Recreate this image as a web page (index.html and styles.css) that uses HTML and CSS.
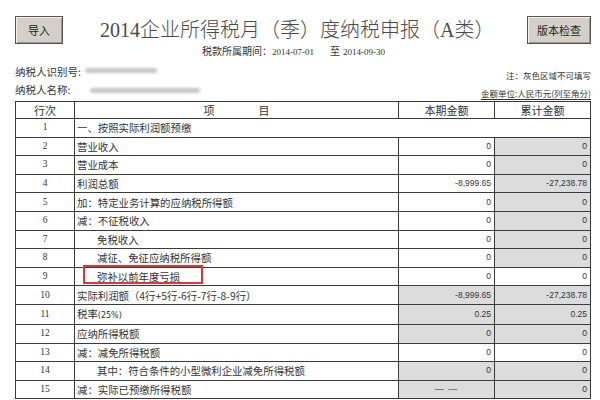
FILE: index.html
```html
<!DOCTYPE html>
<html lang="zh-CN">
<head>
<meta charset="utf-8">
<title>2014企业所得税月（季）度纳税申报（A类）</title>
<link rel="stylesheet" href="styles.css">
</head>
<body>
<div class="page">
  <header class="top">
    <button class="btn">导入</button>
    <h1 class="title">2014企业所得税月（季）度纳税申报（A类）</h1>
    <button class="btn btn-wide">版本检查</button>
  </header>
  <div class="period">税款所属期间：<span class="d">2014-07-01</span><span class="to">至</span><span class="d">2014-09-30</span></div>
  <div class="info">
    <div class="info-row">
      <span class="label">纳税人识别号:</span><span class="blur b1"></span>
      <span class="note">注：灰色区域不可填写</span>
    </div>
    <div class="info-row">
      <span class="label">纳税人名称:</span><span class="blur b2"></span>
      <span class="note unit">金额单位:人民币元(列至角分)</span>
    </div>
  </div>
  <table class="sheet">
    <colgroup>
      <col class="c-no"><col class="c-item"><col class="c-amt"><col class="c-amt">
    </colgroup>
    <thead>
      <tr><th>行次</th><th class="h-item"><span>项</span><span>目</span></th><th>本期金额</th><th>累计金额</th></tr>
    </thead>
    <tbody>
      <tr><td class="no">1</td><td class="item" colspan="3">一、按照实际利润额预缴</td></tr>
      <tr><td class="no">2</td><td class="item">营业收入</td><td class="amt">0</td><td class="amt g">0</td></tr>
      <tr><td class="no">3</td><td class="item">营业成本</td><td class="amt">0</td><td class="amt g">0</td></tr>
      <tr><td class="no">4</td><td class="item">利润总额</td><td class="amt">-8,999.65</td><td class="amt g">-27,238.78</td></tr>
      <tr><td class="no">5</td><td class="item">加：特定业务计算的应纳税所得额</td><td class="amt">0</td><td class="amt g">0</td></tr>
      <tr><td class="no">6</td><td class="item">减：不征税收入</td><td class="amt">0</td><td class="amt g">0</td></tr>
      <tr><td class="no">7</td><td class="item ind">免税收入</td><td class="amt">0</td><td class="amt g">0</td></tr>
      <tr><td class="no">8</td><td class="item ind">减征、免征应纳税所得额</td><td class="amt">0</td><td class="amt g">0</td></tr>
      <tr><td class="no">9</td><td class="item ind mark">弥补以前年度亏损<span class="hl"></span></td><td class="amt">0</td><td class="amt">0</td></tr>
      <tr><td class="no">10</td><td class="item">实际利润额（4行+5行-6行-7行-8-9行）</td><td class="amt g">-8,999.65</td><td class="amt g">-27,238.78</td></tr>
      <tr><td class="no">11</td><td class="item">税率<span class="lat">(25%)</span></td><td class="amt g">0.25</td><td class="amt g">0.25</td></tr>
      <tr><td class="no">12</td><td class="item">应纳所得税额</td><td class="amt g">0</td><td class="amt g">0</td></tr>
      <tr><td class="no">13</td><td class="item">减：减免所得税额</td><td class="amt">0</td><td class="amt">0</td></tr>
      <tr><td class="no">14</td><td class="item ind">其中：符合条件的小型微利企业减免所得税额</td><td class="amt g">0</td><td class="amt g">0</td></tr>
      <tr><td class="no">15</td><td class="item">减：实际已预缴所得税额</td><td class="amt g dash">— —</td><td class="amt g">0</td></tr>
    </tbody>
  </table>
</div>
</body>
</html>
```
FILE: styles.css
```css
html, body {
  margin: 0;
  padding: 0;
  background: #fff;
}
body {
  font-family: "Noto Sans CJK SC", sans-serif;
  color: #2a2a2a;
}
.page {
  width: 576px;
  padding: 16px 9px 0 15px;
}
.top {
  display: flex;
  align-items: center;
  height: 28px;
}
.btn {
  width: 48px;
  height: 28px;
  padding: 0;
  margin: 0;
  background: #d4d0c8;
  border: 1px solid #555;
  box-shadow: inset 1px 1px 0 #f4f2ee, inset -1px -1px 0 #9a968e;
  font-family: "Noto Sans CJK SC", sans-serif;
  font-size: 11px;
  color: #222;
}
.btn-wide {
  width: 64px;
  margin-left: auto;
}
.title {
  margin: 0 0 0 37px;
  font-family: "Liberation Serif", "Noto Sans CJK SC", serif;
  font-weight: 300;
  font-size: 20px;
  line-height: 28px;
  color: #4a4a4a;
  letter-spacing: 0;
}
.period {
  margin-top: 1px;
  height: 12px;
  line-height: 12px;
  font-size: 10px;
  padding-left: 187px;
  color: #333;
}
.period .d {
  font-family: "Liberation Serif", serif;
  font-size: 9px;
}
.period .to {
  margin: 0 3px 0 16px;
}
.info {
  margin-top: 6px;
}
.info-row {
  display: flex;
  align-items: center;
  height: 18px;
}
.label {
  font-size: 10.5px;
  line-height: 18px;
  color: #333;
}
.blur {
  display: inline-block;
  height: 5px;
  background: #c4c4c4;
  filter: blur(1.5px);
  border-radius: 3px;
}
.b1 {
  width: 72px;
  margin-left: 4px;
  margin-top: -4px;
}
.b2 {
  width: 110px;
  margin-left: 20px;
}
.note {
  margin-left: auto;
  align-self: flex-end;
  font-size: 8.5px;
  line-height: 11px;
  color: #333;
}
.unit {
  text-decoration: underline;
  text-underline-offset: 2px;
}
.sheet {
  margin-top: 2px;
  width: 576px;
  border-collapse: collapse;
  table-layout: fixed;
  border: 1px solid #333;
}
.c-no { width: 59px; }
.c-item { width: 324px; }
.c-amt { width: 96px; }
.sheet th, .sheet td {
  border: 1px solid #3a3a3a;
  padding: 0;
  white-space: nowrap;
  overflow: visible;
}
.sheet th {
  height: 16px;
  font-weight: 400;
  font-size: 11px;
  line-height: 16px;
  color: #333;
  text-align: center;
}
.h-item span {
  display: inline-block;
  margin-left: 22px;
  margin-right: 22px;
}
.sheet td {
  height: 17.6px;
  line-height: 17px;
}
.no {
  text-align: center;
  font-family: "Liberation Serif", serif;
  font-size: 9.5px;
  color: #333;
}
.item {
  font-size: 10.4px;
  padding-left: 2px !important;
  color: #333;
}
.item.ind {
  padding-left: 22px !important;
}
.lat {
  font-family: "DejaVu Sans", sans-serif;
  font-size: 8px;
}
.amt {
  text-align: right;
  font-family: "Liberation Sans", sans-serif;
  font-size: 8.5px;
  color: #333;
  padding-right: 3px !important;
}
.g {
  background: #dcdcdc;
}
.dash {
  text-align: center;
  padding-right: 0 !important;
  font-size: 9px;
  letter-spacing: 1px;
}
.mark {
  position: relative;
}
.hl {
  position: absolute;
  left: 8px;
  top: -3px;
  width: 116px;
  height: 15px;
  border: 2px solid #e0353b;
}
```
